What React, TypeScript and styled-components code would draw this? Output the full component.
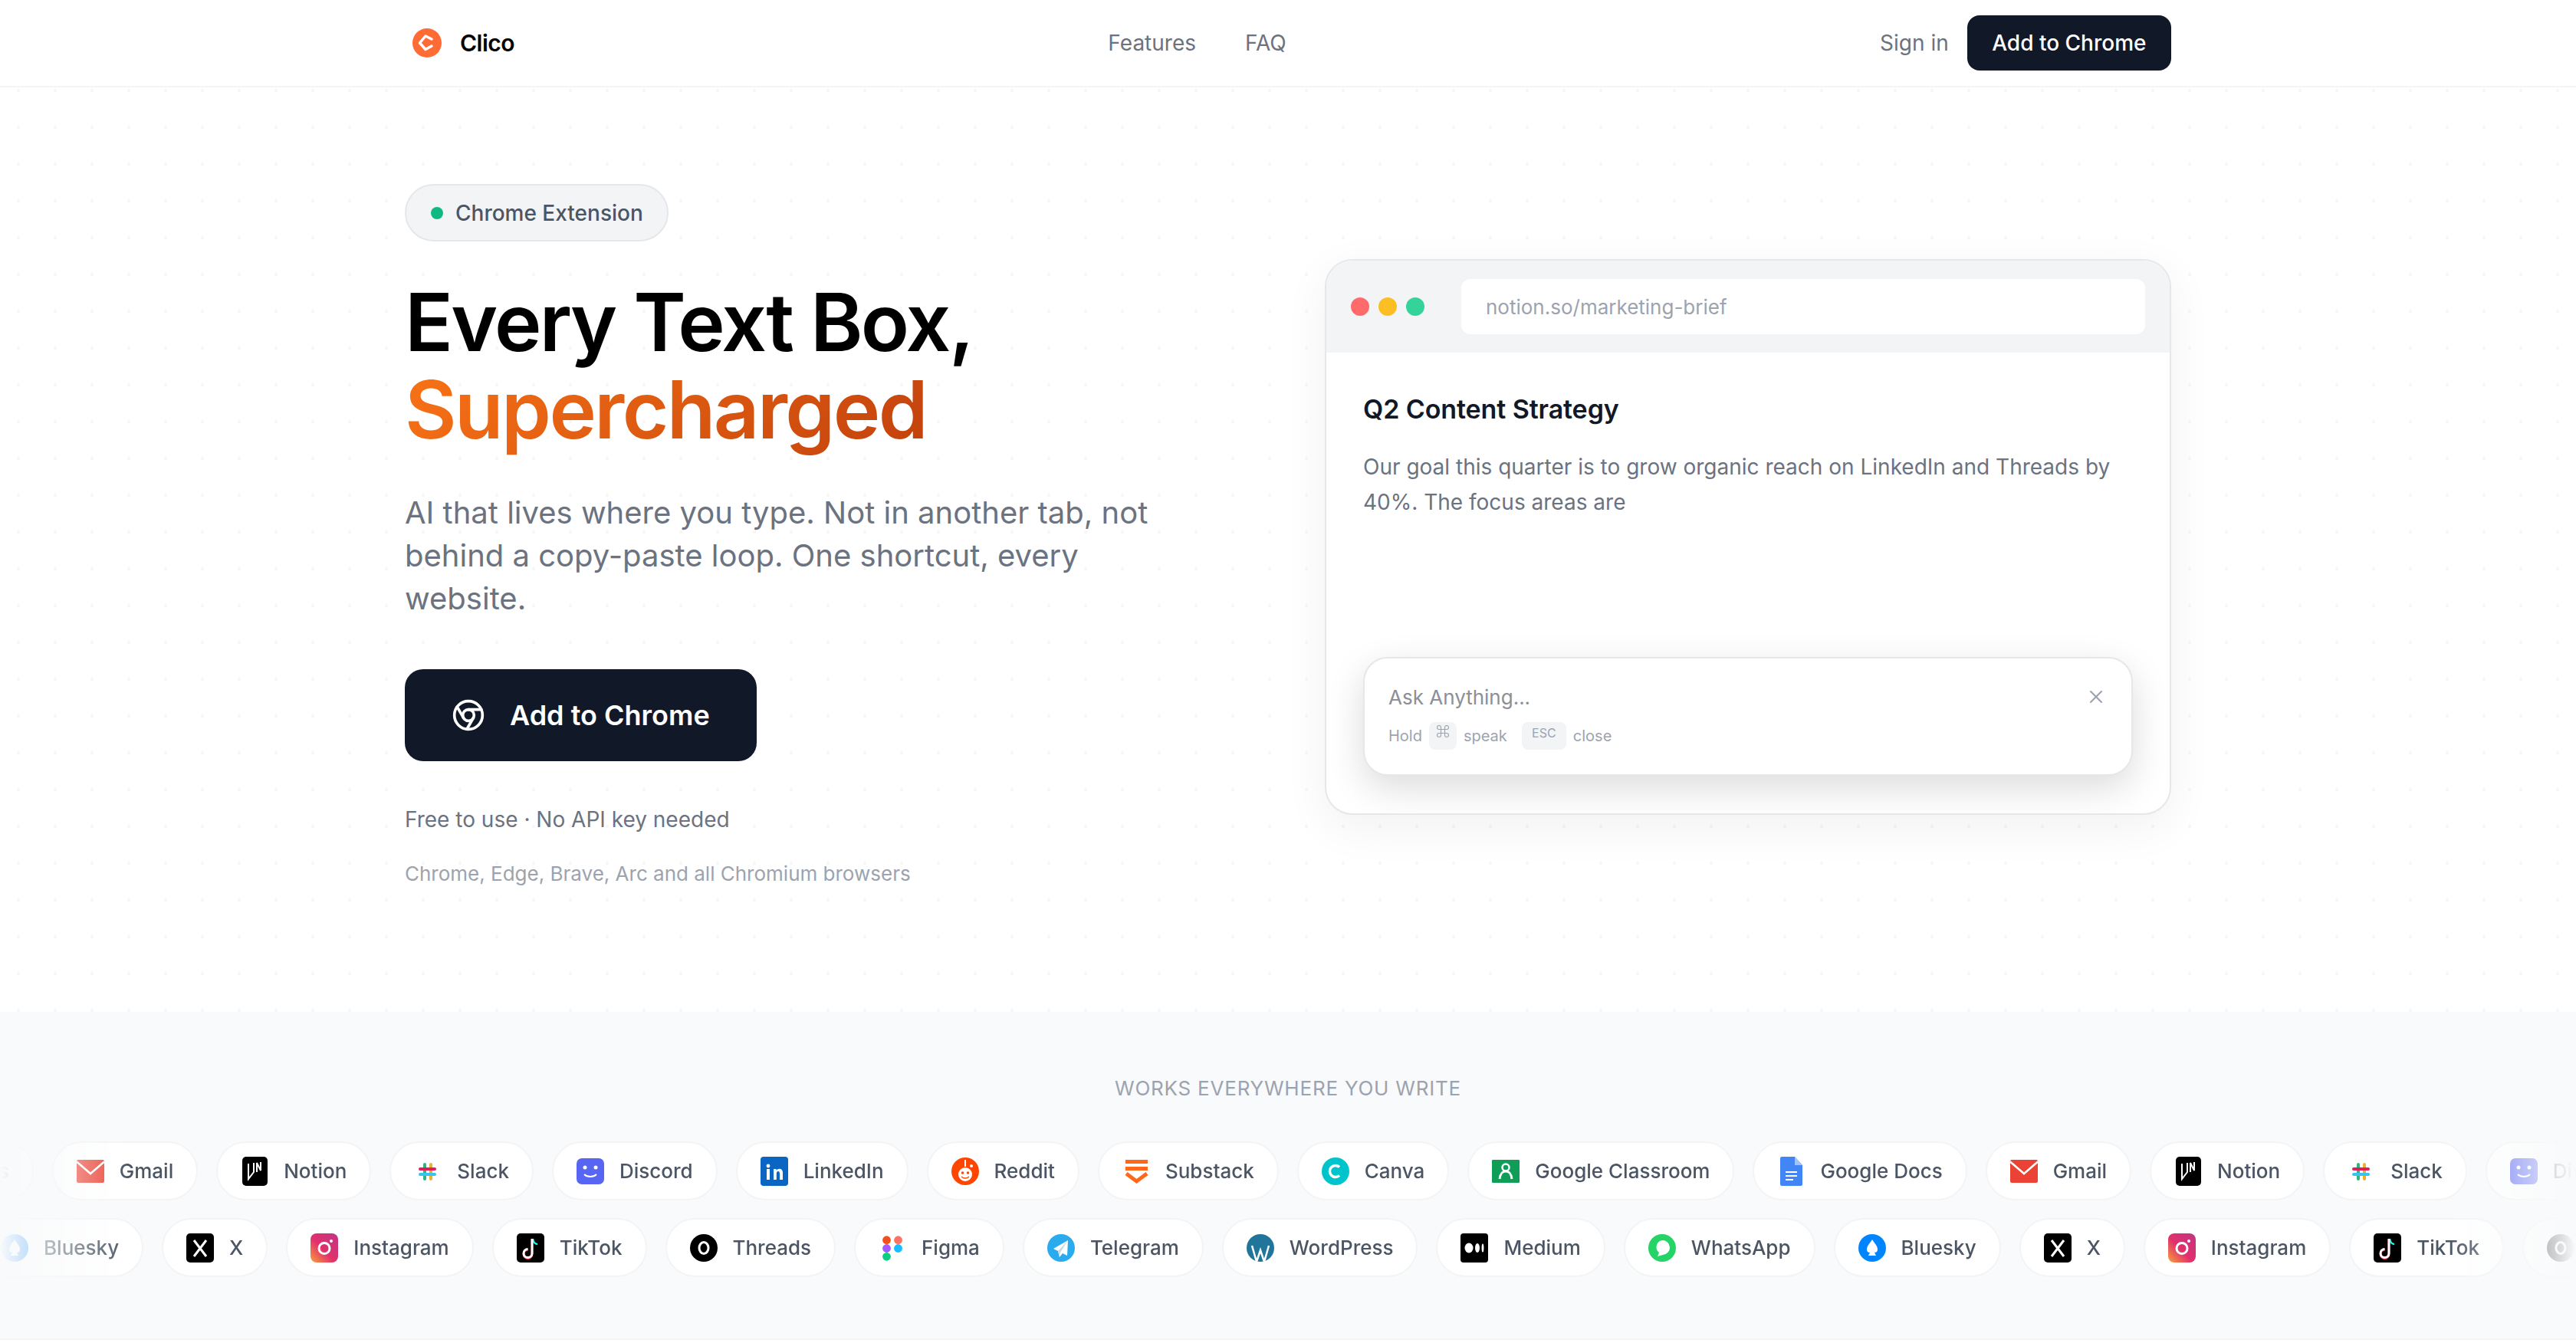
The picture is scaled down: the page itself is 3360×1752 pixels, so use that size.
import React from 'react';
import styled, { createGlobalStyle } from 'styled-components';
import { Chrome, Command, X as CloseIcon } from 'lucide-react';

const GlobalStyle = createGlobalStyle`
  * { box-sizing: border-box; }
  html, body { margin: 0; padding: 0; background: #fff; }
  body { font-family: Inter, "Liberation Sans", sans-serif; color: #111827; }
`;

const Icon = ({ children }: { children: React.ReactNode }) => (
  <svg width="36" height="38" viewBox="0 0 36 38">{children}</svg>
);

const icons: Record<string, React.ReactNode> = {
  Gmail: (
    <Icon>
      <rect y="4" width="36" height="30" rx="2" fill="#EA4335" />
      <path d="M0 6.5 18 22 36 6.5" fill="none" stroke="#fff" strokeWidth="2.5" />
    </Icon>
  ),
  Notion: (
    <Icon>
      <rect x="2" width="33" height="38" rx="5" fill="#000" />
      <path d="M10 9v20l7-9V8M21 20V8l5 10V7" fill="none" stroke="#fff" strokeWidth="2" />
    </Icon>
  ),
  Slack: (
    <Icon>
      <rect x="12" y="8" width="4" height="23" rx="2" fill="#2EB67D" />
      <rect x="20" y="8" width="4" height="23" rx="2" fill="#ECB22E" />
      <rect x="6" y="14" width="23" height="4" rx="2" fill="#E01E5A" />
      <rect x="6" y="21" width="23" height="4" rx="2" fill="#36C5F0" />
    </Icon>
  ),
  Discord: (
    <Icon>
      <rect y="2" width="36" height="34" rx="7" fill="#5865F2" />
      <circle cx="11" cy="14" r="2.5" fill="#fff" />
      <circle cx="25" cy="14" r="2.5" fill="#fff" />
      <path d="M10 23c4 4 12 4 16 0" fill="none" stroke="#fff" strokeWidth="2" />
    </Icon>
  ),
  LinkedIn: (
    <Icon>
      <rect width="36" height="38" rx="4" fill="#0A66C2" />
      <circle cx="10" cy="12" r="2.4" fill="#fff" />
      <rect x="8" y="16" width="4" height="14" fill="#fff" />
      <path d="M17 30V16h3.6v2c1-1.500 2.400-2.300 4-2.300 3 0 4.400 2 4.400 5V30h-4v-8c0-1.700-.6-3-2-3s-2.200 1.300-2.200 3v8z" fill="#fff" />
    </Icon>
  ),
  Reddit: (
    <Icon>
      <circle cx="18" cy="19" r="18" fill="#FF4500" />
      <rect x="17" y="4" width="2" height="9" fill="#fff" />
      <circle cx="26" cy="12" r="2" fill="#fff" />
      <circle cx="18" cy="23" r="9" fill="#fff" />
      <circle cx="14.500" cy="21" r="1.800" fill="#FF4500" />
      <circle cx="21.500" cy="21" r="1.800" fill="#FF4500" />
      <path d="M13 26c3 2.500 7 2.500 10 0" fill="none" stroke="#FF4500" strokeWidth="1.500" />
    </Icon>
  ),
  Substack: (
    <Icon>
      <rect x="4" y="4" width="29" height="5" fill="#FF6719" />
      <rect x="4" y="13" width="29" height="5" fill="#FF6719" />
      <path d="M5 22 18.500 32 32 22" fill="none" stroke="#FF6719" strokeWidth="5" />
    </Icon>
  ),
  Canva: (
    <Icon>
      <circle cx="18" cy="19" r="18" fill="#00C4CC" />
      <path d="M23 13.500a7.500 7.500 0 1 0 0 11" fill="none" stroke="#fff" strokeWidth="3.500" />
    </Icon>
  ),
  'Google Classroom': (
    <Icon>
      <rect y="4" width="36" height="30" rx="1" fill="#0F9D58" />
      <circle cx="18" cy="14" r="4.500" fill="none" stroke="#fff" strokeWidth="2.500" />
      <path d="M10 29c1-7 3-10 8-10s7 3 8 10" fill="none" stroke="#fff" strokeWidth="3" />
    </Icon>
  ),
  'Google Docs': (
    <Icon>
      <path d="M4 2a2 2 0 0 1 2-2h17l10 11v25a2 2 0 0 1-2 2H6a2 2 0 0 1-2-2z" fill="#4285F4" />
      <path d="M23 0l10 11H23z" fill="#A1C2FA" />
      <path d="M11 20h15M11 25h15M11 30h10" stroke="#fff" strokeWidth="2" />
    </Icon>
  ),
  Bluesky: (
    <Icon>
      <circle cx="18" cy="19" r="18" fill="#0085FF" />
      <path d="M18 8c3 5 7 8 7 13 0 3-2 4-4 4l2 4H13l2-4c-2 0-4-1-4-4 0-5 4-8 7-13z" fill="#fff" />
    </Icon>
  ),
  X: (
    <Icon>
      <rect width="36" height="38" rx="5" fill="#000" />
      <path d="M10 9 26 30M26 9 10 30" stroke="#fff" strokeWidth="3" />
    </Icon>
  ),
  Instagram: (
    <Icon>
      <defs>
        <linearGradient id="ig" x1="0" y1="1" x2="1" y2="0">
          <stop offset="0" stopColor="#F9A03A" />
          <stop offset=".45" stopColor="#E1306C" />
          <stop offset="1" stopColor="#C13584" />
        </linearGradient>
      </defs>
      <rect width="36" height="38" rx="8" fill="url(#ig)" />
      <circle cx="18" cy="19.500" r="7" fill="none" stroke="#fff" strokeWidth="3" />
      <circle cx="27" cy="10" r="2" fill="#fff" />
    </Icon>
  ),
  TikTok: (
    <Icon>
      <rect width="36" height="38" rx="5" fill="#000" />
      <path d="M21 7v19a5.500 5.500 0 1 1-5.500-5.500" fill="none" stroke="#FE2C55" strokeWidth="3" transform="translate(-1 1)" />
      <path d="M21 7c0 4 3 7 6 7" fill="none" stroke="#25F4EE" strokeWidth="2.500" />
      <path d="M20 7v19a5.500 5.500 0 1 1-5.500-5.500" fill="none" stroke="#fff" strokeWidth="3" />
    </Icon>
  ),
  Threads: (
    <Icon>
      <circle cx="18" cy="19" r="18" fill="#000" />
      <ellipse cx="18" cy="19" rx="6" ry="7.500" fill="none" stroke="#fff" strokeWidth="3" />
    </Icon>
  ),
  Figma: (
    <Icon>
      <circle cx="10.500" cy="8.700" r="5.400" fill="#F24E1E" />
      <circle cx="25.500" cy="8.700" r="5.400" fill="#FF7262" />
      <circle cx="10.500" cy="19.500" r="5.400" fill="#A259FF" />
      <circle cx="25.500" cy="19.500" r="5.400" fill="#1ABCFE" />
      <circle cx="10.500" cy="30.300" r="5.400" fill="#0ACF83" />
    </Icon>
  ),
  Telegram: (
    <Icon>
      <circle cx="18" cy="19" r="18" fill="#2AABEE" />
      <path d="M27 9 8 20l6 3 2 8 4-5 6 3z" fill="#fff" />
      <path d="M27 9 14 23l2 8 1-6z" fill="#C8DAEA" />
    </Icon>
  ),
  WordPress: (
    <Icon>
      <circle cx="18" cy="19" r="18" fill="#21759B" />
      <path d="M7 16 13 37l5-15 5 15 6-21" fill="none" stroke="#fff" strokeWidth="2.500" />
    </Icon>
  ),
  Medium: (
    <Icon>
      <rect width="36" height="38" rx="4" fill="#000" />
      <ellipse cx="11" cy="19" rx="5.500" ry="6.500" fill="#fff" />
      <ellipse cx="22" cy="19" rx="3" ry="6" fill="#fff" />
      <ellipse cx="29" cy="19" rx="1.400" ry="5.500" fill="#fff" />
    </Icon>
  ),
  WhatsApp: (
    <Icon>
      <circle cx="18" cy="19" r="18" fill="#25D366" />
      <path d="M18 9a9 9 0 0 1 1 19l-7 2 2-5a9 9 0 0 1 4-16z" fill="#fff" />
    </Icon>
  ),
};

const rowOne = ['Google Docs', 'Gmail', 'Notion', 'Slack', 'Discord', 'LinkedIn', 'Reddit', 'Substack', 'Canva', 'Google Classroom', 'Google Docs', 'Gmail', 'Notion', 'Slack', 'Discord'];
const rowTwo = ['Bluesky', 'X', 'Instagram', 'TikTok', 'Threads', 'Figma', 'Telegram', 'WordPress', 'Medium', 'WhatsApp', 'Bluesky', 'X', 'Instagram', 'TikTok', 'Threads'];

export default () => (
  <>
    <GlobalStyle />
    <Nav>
      <NavInner>
        <Brand>
          <svg width="38" height="38" viewBox="0 0 38 38">
            <circle cx="19" cy="19" r="19" fill="#FF6B35" />
            <path d="M25 14 17 10 9.500 19 17 27.500 25 23" fill="none" stroke="#fff" strokeWidth="3.500" strokeLinecap="round" strokeLinejoin="round" />
          </svg>
          Clico
        </Brand>
        <NavLinks>
          <NavLink>Features</NavLink>
          <NavLink>FAQ</NavLink>
        </NavLinks>
        <NavActions>
          <NavLink>Sign in</NavLink>
          <NavButton>Add to Chrome</NavButton>
        </NavActions>
      </NavInner>
    </Nav>
    <Hero>
      <HeroCopy>
        <Badge>
          <BadgeDot />
          Chrome Extension
        </Badge>
        <Title>
          Every Text Box,
          <br />
          <Accent>Supercharged</Accent>
        </Title>
        <Lead>AI that lives where you type. Not in another tab, not behind a copy-paste loop. One shortcut, every website.</Lead>
        <Cta>
          <Chrome size={44} strokeWidth={2} />
          Add to Chrome
        </Cta>
        <Note>Free to use · No API key needed</Note>
        <SubNote>Chrome, Edge, Brave, Arc and all Chromium browsers</SubNote>
      </HeroCopy>
      <Browser>
        <BrowserBar>
          <Dots>
            <Dot $color="#FF6B6B" />
            <Dot $color="#FBBF24" />
            <Dot $color="#34D399" />
          </Dots>
          <Address>notion.so/marketing-brief</Address>
        </BrowserBar>
        <BrowserBody>
          <div>
            <DocTitle>Q2 Content Strategy</DocTitle>
            <DocText>Our goal this quarter is to grow organic reach on LinkedIn and Threads by 40%. The focus areas are</DocText>
          </div>
          <AskBox>
            <AskRow>
              <AskText>Ask Anything...</AskText>
              <CloseIcon size={28} strokeWidth={1.8} color="#9CA3AF" />
            </AskRow>
            <Hints>
              Hold
              <IconKey>
                <Command size={20} strokeWidth={1.3} />
              </IconKey>
              speak
              <Key>ESC</Key>
              close
            </Hints>
          </AskBox>
        </BrowserBody>
      </Browser>
    </Hero>
    <Works>
      <WorksLabel>WORKS EVERYWHERE YOU WRITE</WorksLabel>
      <Marquee>
        <Row $offset={-235.4}>
          {rowOne.map((name, i) => (
            <Pill key={i}>
              {icons[name]}
              {name}
            </Pill>
          ))}
        </Row>
        <Row $offset={-31}>
          {rowTwo.map((name, i) => (
            <Pill key={i}>
              {icons[name]}
              {name}
            </Pill>
          ))}
        </Row>
      </Marquee>
    </Works>
  </>
);

const Nav = styled.header`
  height: 114px;
  border-bottom: 2px solid #f3f4f6;
  background: #fff;
`;

const NavInner = styled.div`
  width: 2304px;
  height: 100%;
  margin: 0 auto;
  display: flex;
  align-items: center;
  justify-content: space-between;
`;

const Brand = styled.div`
  display: flex;
  align-items: center;
  gap: 24px;
  padding-left: 10px;
  font-size: 30px;
  font-weight: 600;
  letter-spacing: -0.5px;
  color: #000;
`;

const NavLinks = styled.nav`
  display: flex;
  gap: 64px;
`;

const NavLink = styled.a`
  font-size: 28px;
  color: #6b7280;
`;

const NavActions = styled.div`
  display: flex;
  align-items: center;
  gap: 24px;
`;

const NavButton = styled.button`
  height: 72px;
  padding: 0 32.5px;
  border: 0;
  border-radius: 16px;
  background: #111827;
  color: #fff;
  font: 500 28px Inter, sans-serif;
`;

const Hero = styled.main`
  height: 1206px;
  padding: 126px 528px 0;
  display: grid;
  grid-template-columns: 1008px 1104px;
  justify-content: space-between;
  align-items: start;
  background-color: #fff;
  background-image: radial-gradient(circle, #f7f7f8 2px, transparent 2.5px);
  background-size: 48px 48px;
  background-position: 0 -20px;
`;

const HeroCopy = styled.div`
  display: flex;
  flex-direction: column;
  align-items: flex-start;
`;

const Badge = styled.div`
  height: 75px;
  padding: 0 31px 0 32px;
  display: flex;
  align-items: center;
  gap: 16px;
  border: 2px solid #e5e7eb;
  border-radius: 38px;
  background: #f3f4f6;
  color: #4b5563;
  font-size: 28px;
  font-weight: 500;
`;

const BadgeDot = styled.span`
  width: 16px;
  height: 16px;
  border-radius: 50%;
  background: #10b981;
`;

const Title = styled.h1`
  margin: 48px 0 0;
  font-size: 104px;
  line-height: 114px;
  font-weight: 600;
  letter-spacing: -2.6px;
  color: #000;
`;

const Accent = styled.span`
  background: linear-gradient(135deg, #f97316, #c2410c);
  -webkit-background-clip: text;
  background-clip: text;
  color: transparent;
`;

const Lead = styled.p`
  margin: 50px 0 0;
  font-size: 40px;
  line-height: 56px;
  color: #6b7280;
`;

const Cta = styled.button`
  margin-top: 64px;
  width: 459px;
  height: 120px;
  padding: 0 0 0 61px;
  display: flex;
  align-items: center;
  gap: 32px;
  border: 0;
  border-radius: 24px;
  background: #111827;
  color: #fff;
  font: 600 36px Inter, sans-serif;
`;

const Note = styled.p`
  margin: 55px 0 0;
  font-size: 28px;
  line-height: 42px;
  color: #6b7280;
`;

const SubNote = styled.p`
  margin: 30px 0 0;
  font-size: 26px;
  line-height: 39px;
  color: #9ca3af;
`;

const Browser = styled.section`
  margin-top: 98px;
  height: 725px;
  display: flex;
  flex-direction: column;
  border: 2px solid #e5e7eb;
  border-radius: 36px;
  background: #fff;
  overflow: hidden;
  box-shadow: 0 16px 60px rgba(0, 0, 0, 0.06);
`;

const BrowserBar = styled.div`
  height: 120px;
  padding: 0 32px;
  display: flex;
  align-items: center;
  gap: 48px;
  background: #f3f4f6;
`;

const Dots = styled.div`
  display: flex;
  gap: 12px;
`;

const Dot = styled.span<{ $color: string }>`
  width: 24px;
  height: 24px;
  border-radius: 50%;
  background: ${({ $color }) => $color};
`;

const Address = styled.div`
  flex: 1;
  height: 72px;
  padding: 0 32px;
  display: flex;
  align-items: center;
  border-radius: 12px;
  background: #fff;
  color: #9ca3af;
  font-size: 26px;
`;

const BrowserBody = styled.div`
  flex: 1;
  padding: 48px 48px 49px;
  display: flex;
  flex-direction: column;
  justify-content: space-between;
`;

const DocTitle = styled.h2`
  margin: 0;
  font-size: 34px;
  line-height: 52px;
  font-weight: 600;
  letter-spacing: -0.1px;
  color: #111827;
`;

const DocText = styled.p`
  margin: 26px 0 0;
  font-size: 28px;
  line-height: 46px;
  color: #6b7280;
`;

const AskBox = styled.div`
  height: 155px;
  padding: 29px 32px 0 31px;
  border: 2px solid #e5e7eb;
  border-radius: 32px;
  background: #fff;
  box-shadow: 0 16px 48px rgba(0, 0, 0, 0.14);
`;

const AskRow = styled.div`
  display: flex;
  align-items: center;
  justify-content: space-between;
  height: 42px;
`;

const AskText = styled.span`
  font-size: 26px;
  color: #8b8f97;
`;

const Hints = styled.div`
  margin-top: 12px;
  display: flex;
  align-items: center;
  gap: 9px;
  font-size: 20px;
  color: #9ca3af;
`;

const IconKey = styled.kbd`
  width: 36px;
  height: 36px;
  padding-top: 2px;
  display: flex;
  justify-content: center;
  border-radius: 8px;
  background: #f3f4f6;
  color: #9ca3af;
`;

const Key = styled.kbd`
  width: 58px;
  height: 36px;
  margin-left: 10px;
  border-radius: 8px;
  background: #f3f4f6;
  text-align: center;
  font: 16px/28px Inter, sans-serif;
  color: #9ca3af;
`;

const Works = styled.section`
  height: 428px;
  padding-top: 82px;
  border-bottom: 2px solid #f3f4f6;
  background: #f9fafb;
`;

const WorksLabel = styled.div`
  text-align: center;
  font-size: 26px;
  line-height: 36px;
  letter-spacing: 0.78px;
  color: #9ca3af;
`;

const Marquee = styled.div`
  margin-top: 51px;
  display: flex;
  flex-direction: column;
  gap: 23px;
  overflow: hidden;
  -webkit-mask-image: linear-gradient(90deg, transparent, #000 5%, #000 95%, transparent);
  mask-image: linear-gradient(90deg, transparent, #000 5%, #000 95%, transparent);
`;

const Row = styled.div<{ $offset: number }>`
  display: flex;
  gap: 24px;
  width: max-content;
  margin-left: ${({ $offset }) => $offset}px;
`;

const Pill = styled.div`
  height: 77px;
  padding: 0 30px;
  display: flex;
  align-items: center;
  gap: 20px;
  flex-shrink: 0;
  border: 2px solid #f3f4f6;
  border-radius: 39px;
  background: #fff;
  color: #4b5563;
  font-size: 26px;
  font-weight: 500;
`;
